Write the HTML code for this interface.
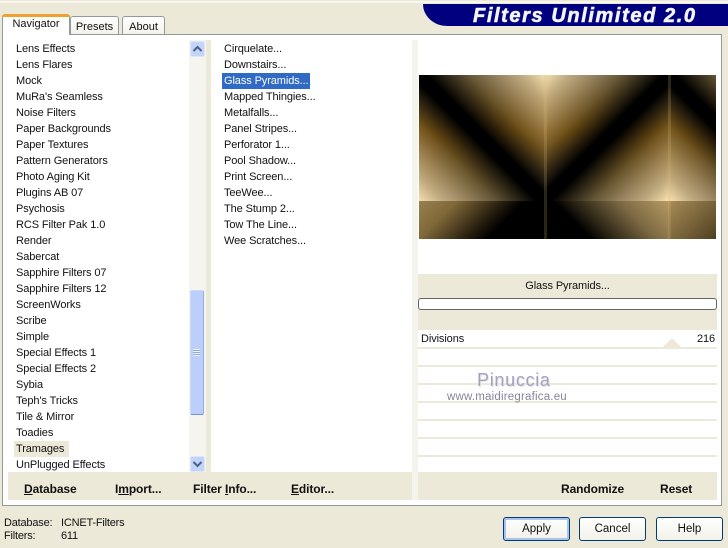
<!DOCTYPE html>
<html><head><meta charset="utf-8"><style>
*{box-sizing:border-box;margin:0;padding:0}
html,body{width:728px;height:548px;overflow:hidden;background:#ece9d8}
body{position:relative;font-family:"Liberation Sans",sans-serif;font-size:11px;color:#111}
.a{position:absolute}
.t{position:absolute;white-space:nowrap;line-height:16px;height:16px;letter-spacing:-.1px}
.b{position:absolute;white-space:nowrap;font-weight:bold;font-size:12px;line-height:16px;color:#111;letter-spacing:-.1px}
u{text-decoration:underline}
.tab{position:absolute;background:linear-gradient(#fff,#f3f2ea);border:1px solid #919b9c;border-bottom:none;border-radius:3px 3px 0 0;text-align:center;line-height:20px}
.sb{position:absolute;left:190px;width:15px;height:16px;background:#c3d4fb;border:1px solid #dde7fc;border-radius:2px}
.btn{position:absolute;top:517px;width:67px;height:24px;border:1px solid #003c74;border-radius:3px;background:linear-gradient(#fff,#f2f1e9);text-align:center;line-height:23px;font-size:11.5px}
.ln{position:absolute;left:418px;width:299px;height:2px;background:#ece9d8}
.s{position:absolute;line-height:13px;white-space:nowrap;letter-spacing:-.2px}
</style></head><body>
<div class="a" style="left:0;top:1px;width:728px;height:2px;background:#f7f6f0"></div>
<div class="a" style="left:423px;top:4px;width:305px;height:22px;background:#00007f;border-radius:0 0 0 24px/0 0 0 22px"></div>
<div class="a" style="left:473px;top:5px;height:22px;line-height:22px;white-space:nowrap;color:#f4f4f4;font-weight:bold;font-style:italic;font-size:20px;letter-spacing:1.6px;-webkit-text-stroke:.6px #f4f4f4">Filters Unlimited 2.0</div>

<div class="a" style="left:2px;top:34px;width:720px;height:472px;background:#fff;border:1px solid #919b9c"></div>
<div class="tab" style="left:70px;top:16px;width:49px;height:18px">Presets</div>
<div class="tab" style="left:122px;top:16px;width:43px;height:18px">About</div>
<div class="a" style="left:2px;top:14px;width:68px;height:21px;background:#fff;border:1px solid #919b9c;border-bottom:none;border-top:none;border-radius:3px 3px 0 0;text-align:center;line-height:21px"><div class="a" style="left:-1px;top:0;width:68px;height:3px;background:#f0a030;border-radius:3px 3px 0 0"></div>Navigator</div>

<div class="a" style="left:189px;top:40px;width:17px;height:432px;background:#f5f4ee"></div>
<div class="a" style="left:206px;top:40px;width:5px;height:432px;background:#ece9d8"></div>
<div class="a" style="left:412px;top:40px;width:6px;height:460px;background:#f4f3ec"></div>
<div class="sb" style="top:41px"><svg width="13" height="14" style="display:block"><path d="M2.5 9 L6.5 5 L10.5 9" fill="none" stroke="#4d6185" stroke-width="2"/></svg></div>
<div class="a" style="left:190px;top:290px;width:14px;height:125px;background:#bccffa;border:1px solid #c9d8fb;border-bottom:1px solid #6f93d8;border-right:1px solid #8fb0ea;border-radius:2px"></div>
<div class="a" style="left:193px;top:349px;width:7px;height:7px;background:repeating-linear-gradient(#eef3ff 0 1px,#8fa8e0 1px 2px)"></div>
<div class="sb" style="top:456px"><svg width="13" height="14" style="display:block"><path d="M2.5 5 L6.5 9 L10.5 5" fill="none" stroke="#4d6185" stroke-width="2"/></svg></div>

<div class="a" style="left:14px;top:441px;width:55px;height:16px;background:#ece9d8"></div>
<div class="t" style="left:16px;top:41px">Lens Effects</div>
<div class="t" style="left:16px;top:57px">Lens Flares</div>
<div class="t" style="left:16px;top:73px">Mock</div>
<div class="t" style="left:16px;top:89px">MuRa's Seamless</div>
<div class="t" style="left:16px;top:105px">Noise Filters</div>
<div class="t" style="left:16px;top:121px">Paper Backgrounds</div>
<div class="t" style="left:16px;top:137px">Paper Textures</div>
<div class="t" style="left:16px;top:153px">Pattern Generators</div>
<div class="t" style="left:16px;top:169px">Photo Aging Kit</div>
<div class="t" style="left:16px;top:185px">Plugins AB 07</div>
<div class="t" style="left:16px;top:201px">Psychosis</div>
<div class="t" style="left:16px;top:217px">RCS Filter Pak 1.0</div>
<div class="t" style="left:16px;top:233px">Render</div>
<div class="t" style="left:16px;top:249px">Sabercat</div>
<div class="t" style="left:16px;top:265px">Sapphire Filters 07</div>
<div class="t" style="left:16px;top:281px">Sapphire Filters 12</div>
<div class="t" style="left:16px;top:297px">ScreenWorks</div>
<div class="t" style="left:16px;top:313px">Scribe</div>
<div class="t" style="left:16px;top:329px">Simple</div>
<div class="t" style="left:16px;top:345px">Special Effects 1</div>
<div class="t" style="left:16px;top:361px">Special Effects 2</div>
<div class="t" style="left:16px;top:377px">Sybia</div>
<div class="t" style="left:16px;top:393px">Teph's Tricks</div>
<div class="t" style="left:16px;top:409px">Tile &amp; Mirror</div>
<div class="t" style="left:16px;top:425px">Toadies</div>
<div class="t" style="left:16px;top:441px">Tramages</div>
<div class="t" style="left:16px;top:457px">UnPlugged Effects</div>

<div class="a" style="left:222px;top:73px;width:88px;height:16px;background:#316ac5"></div>
<div class="t" style="left:224px;top:41px">Cirquelate...</div>
<div class="t" style="left:224px;top:57px">Downstairs...</div>
<div class="t" style="left:224px;top:73px;color:#fff">Glass Pyramids...</div>
<div class="t" style="left:224px;top:89px">Mapped Thingies...</div>
<div class="t" style="left:224px;top:105px">Metalfalls...</div>
<div class="t" style="left:224px;top:121px">Panel Stripes...</div>
<div class="t" style="left:224px;top:137px">Perforator 1...</div>
<div class="t" style="left:224px;top:153px">Pool Shadow...</div>
<div class="t" style="left:224px;top:169px">Print Screen...</div>
<div class="t" style="left:224px;top:185px">TeeWee...</div>
<div class="t" style="left:224px;top:201px">The Stump 2...</div>
<div class="t" style="left:224px;top:217px">Tow The Line...</div>
<div class="t" style="left:224px;top:233px">Wee Scratches...</div>

<div class="a" style="left:8px;top:472px;width:404px;height:28px;background:#ece9d8"></div>
<div class="a" style="left:418px;top:472px;width:299px;height:28px;background:#ece9d8"></div>
<div class="b" style="left:24px;top:481px"><u>D</u>atabase</div>
<div class="b" style="left:115px;top:481px">I<u>m</u>port...</div>
<div class="b" style="left:193px;top:481px">Filter <u>I</u>nfo...</div>
<div class="b" style="left:291px;top:481px"><u>E</u>ditor...</div>
<div class="b" style="left:561px;top:481px">Randomize</div>
<div class="b" style="left:660px;top:481px">Reset</div>

<div class="a" style="left:419px;top:75px;width:297px;height:164px;overflow:hidden;background:#000">
 <svg width="297" height="164" style="position:absolute;left:0;top:0;display:block">
  <defs>
   <linearGradient id="gA" gradientUnits="userSpaceOnUse" x1="126" y1="0" x2="0" y2="126">
    <stop offset="0" stop-color="#f2dfae"/><stop offset=".1" stop-color="#bda981"/><stop offset=".2" stop-color="#94815e"/><stop offset=".3" stop-color="#665839"/><stop offset=".4" stop-color="#2a2418"/><stop offset=".47" stop-color="#000"/><stop offset=".53" stop-color="#000"/><stop offset=".6" stop-color="#2a2418"/><stop offset=".7" stop-color="#665839"/><stop offset=".8" stop-color="#94815e"/><stop offset=".9" stop-color="#bda981"/><stop offset="1" stop-color="#f2dfae"/>
   </linearGradient>
   <linearGradient id="gB" gradientUnits="userSpaceOnUse" x1="126" y1="0" x2="250" y2="126">
    <stop offset="0" stop-color="#f2dfae"/><stop offset=".1" stop-color="#bda981"/><stop offset=".2" stop-color="#94815e"/><stop offset=".3" stop-color="#665839"/><stop offset=".4" stop-color="#2a2418"/><stop offset=".47" stop-color="#000"/><stop offset=".53" stop-color="#000"/><stop offset=".6" stop-color="#2a2418"/><stop offset=".7" stop-color="#665839"/><stop offset=".8" stop-color="#94815e"/><stop offset=".9" stop-color="#bda981"/><stop offset="1" stop-color="#f7e2ae"/>
   </linearGradient>
   <linearGradient id="gC" gradientUnits="userSpaceOnUse" x1="374" y1="0" x2="250" y2="126">
    <stop offset="0" stop-color="#f2dfae"/><stop offset=".3" stop-color="#665839"/><stop offset=".4" stop-color="#2a2418"/><stop offset=".47" stop-color="#000"/><stop offset=".53" stop-color="#000"/><stop offset=".6" stop-color="#2a2418"/><stop offset=".7" stop-color="#665839"/><stop offset=".8" stop-color="#94815e"/><stop offset=".9" stop-color="#bda981"/><stop offset="1" stop-color="#f7e2ae"/>
   </linearGradient>
   <linearGradient id="gD" gradientUnits="userSpaceOnUse" x1="0" y1="126" x2="126" y2="252">
    <stop offset="0" stop-color="#9a8050"/><stop offset=".15" stop-color="#806838"/><stop offset=".33" stop-color="#2a2010"/><stop offset=".42" stop-color="#000"/><stop offset="1" stop-color="#000"/>
   </linearGradient>
   <linearGradient id="gE" gradientUnits="userSpaceOnUse" x1="250" y1="126" x2="126" y2="252">
    <stop offset="0" stop-color="#b89a62"/><stop offset=".2" stop-color="#7d6a44"/><stop offset=".38" stop-color="#2a2314"/><stop offset=".46" stop-color="#000"/><stop offset="1" stop-color="#000"/>
   </linearGradient>
   <linearGradient id="gF" gradientUnits="userSpaceOnUse" x1="250" y1="126" x2="374" y2="252">
    <stop offset="0" stop-color="#a88c58"/><stop offset=".3" stop-color="#5a4826"/><stop offset=".5" stop-color="#151007"/><stop offset="1" stop-color="#000"/>
   </linearGradient>
   <linearGradient id="hue" x1="0" y1="0" x2="0" y2="1">
    <stop offset="0" stop-color="#b8904a" stop-opacity="0"/><stop offset=".45" stop-color="#b8904a" stop-opacity=".65"/><stop offset=".7" stop-color="#b8904a" stop-opacity=".35"/><stop offset="1" stop-color="#b8904a" stop-opacity="0"/>
   </linearGradient>
  </defs>
  <rect x="0" y="0" width="126" height="126" fill="url(#gA)"/>
  <rect x="126" y="0" width="124" height="126" fill="url(#gB)"/>
  <rect x="250" y="0" width="47" height="126" fill="url(#gC)"/>
  <rect x="0" y="0" width="297" height="126" fill="url(#hue)" style="mix-blend-mode:color"/>
  <rect x="0" y="126" width="126" height="38" fill="url(#gD)"/>
  <rect x="126" y="126" width="124" height="38" fill="url(#gE)"/>
  <rect x="250" y="126" width="47" height="38" fill="url(#gF)"/>
  <rect x="125" y="0" width="3" height="164" fill="#d8b878" opacity=".2"/>
  <rect x="249" y="0" width="3" height="164" fill="#d8b878" opacity=".2"/>
 </svg>
</div>

<div class="a" style="left:418px;top:274px;width:299px;height:56px;background:#ece9d8"></div>
<div class="t" style="left:418px;top:278px;width:299px;text-align:center">Glass Pyramids...</div>
<div class="a" style="left:418px;top:298px;width:299px;height:12px;background:#fff;border:1px solid #666;border-radius:3px"></div>
<div class="a" style="left:418px;top:330px;width:299px;height:142px;background:#fff"></div>
<div class="t" style="left:421px;top:331px">Divisions</div>
<div class="t" style="left:697px;top:331px">216</div>
<div class="a" style="left:663px;top:338px;width:0;height:0;border-left:9px solid transparent;border-right:9px solid transparent;border-bottom:9px solid #ece9d8"></div>
<div class="ln" style="top:347px"></div>
<div class="ln" style="top:365px"></div>
<div class="ln" style="top:383px"></div>
<div class="ln" style="top:401px"></div>
<div class="ln" style="top:419px"></div>
<div class="ln" style="top:437px"></div>
<div class="ln" style="top:455px"></div>
<div class="a" style="left:477px;top:369px;font-size:18px;line-height:22px;letter-spacing:.7px;color:#a2a2bc;white-space:nowrap;text-shadow:1px 1px 0 #e6e6ee">Pinuccia</div>
<div class="a" style="left:447px;top:390px;font-size:11.5px;line-height:14px;letter-spacing:.2px;color:#85859c;white-space:nowrap">www.maidiregrafica.eu</div>

<div class="s" style="left:4px;top:517px">Database:</div>
<div class="s" style="left:61px;top:517px">ICNET-Filters</div>
<div class="s" style="left:4px;top:530px">Filters:</div>
<div class="s" style="left:61px;top:530px">611</div>

<div class="btn" style="left:503px;box-shadow:inset 0 0 0 2px #a9c4ef">Apply</div>
<div class="btn" style="left:579px">Cancel</div>
<div class="btn" style="left:656px">Help</div>
</body></html>
